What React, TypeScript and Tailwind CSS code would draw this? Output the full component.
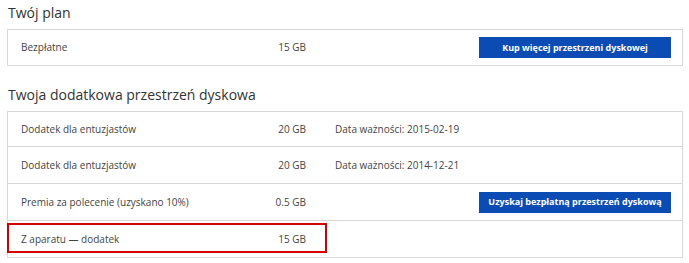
import React from 'react';

interface StorageRow {
  label: string;
  amount: string;
  expires?: string;
  action?: string;
  highlighted?: boolean;
  height: string;
}

const planRows: StorageRow[] = [
  { label: 'Bezpłatne', amount: '15 GB', action: 'Kup więcej przestrzeni dyskowej', height: 'h-[35px]' },
];

// heights include the 1px divider drawn by divide-y
const extraRows: StorageRow[] = [
  { label: 'Dodatek dla entuzjastów', amount: '20 GB', expires: '2015-02-19', height: 'h-[35px]' },
  { label: 'Dodatek dla entuzjastów', amount: '20 GB', expires: '2014-12-21', height: 'h-[37px]' },
  {
    label: 'Premia za polecenie (uzyskano 10%)',
    amount: '0.5 GB',
    action: 'Uzyskaj bezpłatną przestrzeń dyskową',
    height: 'h-[37px]',
  },
  { label: 'Z aparatu — dodatek', amount: '15 GB', highlighted: true, height: 'h-[36px]' },
];

const Row: React.FC<{ row: StorageRow }> = ({ row }) => (
  <div className={`relative flex items-center pl-[13px] pr-[11px] text-[10px] text-[#444] ${row.height}`}>
    <span className="w-[240px] flex-none">{row.label}</span>
    <span className="w-[45px] flex-none text-right">{row.amount}</span>
    {row.expires && <span className="ml-[29px]">Data ważności: {row.expires}</span>}
    {row.action && (
      <button className="ml-auto h-[21px] w-[192px] bg-[#0a4cb4] text-[9px] font-bold text-white">
        {row.action}
      </button>
    )}
    {/* annotation frame around the camera add-on */}
    {row.highlighted && (
      <div className="absolute left-[-1px] top-[2px] h-[30px] w-[320px] border-2 border-[#d40000]"></div>
    )}
  </div>
);

export default function App() {
  return (
    <div className="h-[263px] w-[689px] overflow-hidden bg-white pl-[7px] pr-[6px] pt-[3px] font-['Open_Sans',sans-serif]">
      <h2 className="mb-[6px] pl-[1px] text-[14px] leading-[20px] font-normal text-[#333]">Twój plan</h2>
      <div className="border border-[#d8d8d8]">
        {planRows.map((row, i) => (
          <Row key={i} row={row} />
        ))}
      </div>

      <h2 className="mb-[6px] mt-[19px] pl-[1px] text-[14px] leading-[20px] font-normal text-[#333]">
        Twoja dodatkowa przestrzeń dyskowa
      </h2>
      <div className="divide-y divide-[#d8d8d8] border border-[#d8d8d8]">
        {extraRows.map((row, i) => (
          <Row key={i} row={row} />
        ))}
      </div>
    </div>
  );
}
